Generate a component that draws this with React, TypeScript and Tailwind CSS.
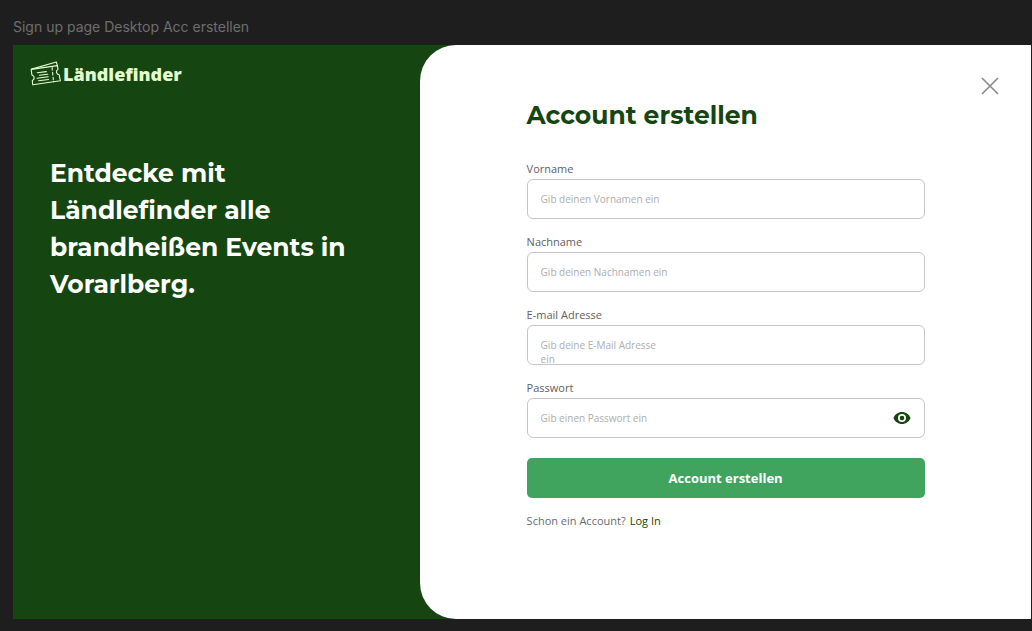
import { useState } from "react";

const fieldBox =
  "block h-10 w-full rounded-md border border-[#c6c6c6] bg-white px-[13px] font-['Open_Sans',sans-serif] text-[10px] leading-[14px] text-[#555555] placeholder:text-[#adadad] placeholder:opacity-100 outline-none focus:border-[#40a45f]";
const labelText = "text-[11px] leading-[14px] text-[#5f5f5f]";

function TicketLogo() {
  return (
    <svg
      viewBox="0 0 32 26"
      className="h-[26px] w-8 shrink-0"
      fill="none"
      stroke="#e4fbd0"
      strokeWidth="1.1"
      strokeLinejoin="round"
      strokeLinecap="round"
      aria-hidden="true"
    >
      <path d="M1.2 8.4 27.4 4.6 28 8.6C25.6 9.6 26 13.2 29.2 13.8L30.4 19.8 2.7 23.8 2.3 19.5C4.9 18.5 4.9 15.2 1.9 14Z" />
      <path d="M1.6 8.1 26.3 1 27.4 4.6" />
      <path d="M7.2 11.8 16.4 10.6M9.4 14.2 17.8 13.2M7 17.2 18.2 15.7M8.6 19.8 18.6 18.5" />
      <path d="M22.2 6.6V8.9M22.6 11.3 22.8 14M23.1 16.4 23.3 18.6M23.5 20.4V20.8" />
    </svg>
  );
}

function EyeIcon() {
  return (
    <svg viewBox="0 0 18 12" className="h-3 w-[18px]" aria-hidden="true">
      <path
        fill="#154612"
        fillRule="evenodd"
        d="M9 0C5 0 1.8 2.4.5 6 1.8 9.6 5 12 9 12s7.200-2.400 8.500-6C16.200 2.400 13 0 9 0Zm0 10a4 4 0 1 1 0-8 4 4 0 0 1 0 8Z"
      />
      <circle cx="9" cy="6" r="2.300" fill="#154612" />
    </svg>
  );
}

function TextField({ id, label, placeholder }: { id: string; label: string; placeholder: string }) {
  return (
    <div className="flex flex-col gap-[3px]">
      <label htmlFor={id} className={labelText}>{label}</label>
      <input id={id} type="text" placeholder={placeholder} className={fieldBox} />
    </div>
  );
}

export default function App() {
  const [visible, setVisible] = useState(false);

  return (
    <div className="flex min-h-screen flex-col bg-[#1e1e1e] pr-px pb-3 pl-[13px] font-['Open_Sans',sans-serif]">
      <p className="pt-[17px] pb-2 font-['Inter',sans-serif] text-sm leading-5 text-[#6e6e6e]">
        Sign up page Desktop Acc erstellen
      </p>

      <main className="grid flex-1 grid-cols-[2fr_3fr] bg-[#154612]">
        <section className="flex flex-col">
          <div className="flex items-center gap-px pt-4 pl-[17px]">
            <TicketLogo />
            <span className="font-['Noto_Sans',sans-serif] text-lg leading-[26px] font-black text-[#e4fbd0]">
              Ländlefinder
            </span>
          </div>
          <h2 className="pt-[68px] pr-10 pl-[37px] font-['Montserrat','Inter',sans-serif] text-[25px] leading-[37px] font-bold text-white">
            Entdecke mit
            <br />
            Ländlefinder alle
            <br />
            brandheißen Events in
            <br />
            Vorarlberg.
          </h2>
        </section>

        <section className="flex flex-col rounded-l-[36px] bg-white">
          <button type="button" aria-label="Schließen" className="mt-8 mr-8 self-end">
            <svg viewBox="0 0 18 18" className="size-[18px]" stroke="#858585" strokeWidth="1.500" aria-hidden="true">
              <path d="M1 1 17 17M17 1 1 17" />
            </svg>
          </button>

          <div className="mx-auto flex w-full max-w-[398px] flex-col">
            <h1 className="font-['Montserrat','Inter',sans-serif] text-[25px] leading-10 font-bold text-[#154612]">
              Account erstellen
            </h1>

            <form className="flex flex-col gap-4 pt-[27px]" onSubmit={(e) => e.preventDefault()}>
              <TextField id="vorname" label="Vorname" placeholder="Gib deinen Vornamen ein" />
              <TextField id="nachname" label="Nachname" placeholder="Gib deinen Nachnamen ein" />
              <div className="flex flex-col gap-[3px]">
                <label htmlFor="email" className={labelText}>E-mail Adresse</label>
                <div className="h-10 overflow-hidden rounded-md border border-[#c6c6c6] focus-within:border-[#40a45f]">
                  <textarea
                    id="email"
                    inputMode="email"
                    placeholder="Gib deine E-Mail Adresse ein"
                    className="ml-[13px] block h-full w-32 resize-none overflow-hidden pt-3 text-[10px] leading-[14px] text-[#555555] outline-none placeholder:text-[#adadad] placeholder:opacity-100"
                  />
                </div>
              </div>
              <div className="flex flex-col gap-[3px]">
                <label htmlFor="passwort" className={labelText}>Passwort</label>
                <div className="flex h-10 items-center rounded-md border border-[#c6c6c6] px-[13px] focus-within:border-[#40a45f]">
                  <input
                    id="passwort"
                    type={visible ? "text" : "password"}
                    placeholder="Gib einen Passwort ein"
                    className="min-w-0 flex-1 text-[10px] leading-[14px] text-[#555555] outline-none placeholder:text-[#adadad] placeholder:opacity-100"
                  />
                  <button type="button" aria-label="Passwort anzeigen" onClick={() => setVisible(!visible)}>
                    <EyeIcon />
                  </button>
                </div>
              </div>
              <button
                type="submit"
                className="mt-1 h-10 rounded-[5px] bg-[#40a45f] text-[13px] leading-5 font-bold text-white"
              >
                Account erstellen
              </button>
            </form>

            <p className="flex gap-1 pt-4 text-[11px] leading-[14px] text-[#6b6b6b]">
              Schon ein Account?
              <a href="#login" className="text-[#154612]">Log In</a>
            </p>
          </div>
        </section>
      </main>
    </div>
  );
}
